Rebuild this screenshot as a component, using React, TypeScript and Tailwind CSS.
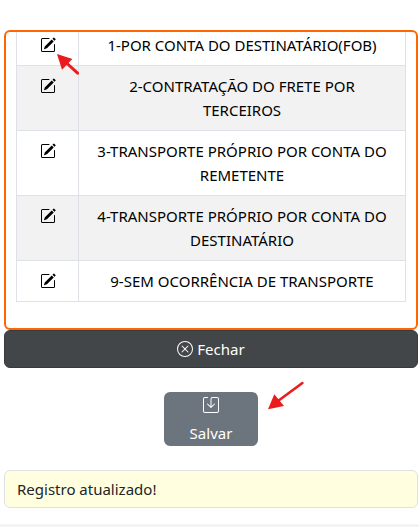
import { BsPencilSquare, BsSave, BsXCircle } from 'react-icons/bs'

const FREIGHT_TYPES = [
  '1-POR CONTA DO DESTINATÁRIO(FOB)',
  '2-CONTRATAÇÃO DO FRETE POR TERCEIROS',
  '3-TRANSPORTE PRÓPRIO POR CONTA DO REMETENTE',
  '4-TRANSPORTE PRÓPRIO POR CONTA DO DESTINATÁRIO',
  '9-SEM OCORRÊNCIA DE TRANSPORTE',
]

/** Red pointer aimed up and left, at the edit icon. */
function EditPointer() {
  return (
    <svg
      aria-hidden
      viewBox="0 0 24 22"
      className="pointer-events-none absolute left-10 top-[29px] z-10 h-[22px] w-6"
    >
      <path d="M0 0 15.4 5 5 15.8Z" fill="#ea1c1c" />
      <path d="M9 8.5 20.6 19.2" stroke="#ea1c1c" strokeWidth="3" strokeLinecap="round" />
    </svg>
  )
}

/** Red pointer aimed down and left, at the save button. */
function SavePointer() {
  return (
    <svg
      aria-hidden
      viewBox="0 0 38 30"
      className="pointer-events-none absolute -top-3 left-[104px] h-[30px] w-[38px]"
    >
      <path d="M0 29.3 6.3 14.3 16 26Z" fill="#ea1c1c" />
      <path d="M10 21 34.4 3" stroke="#ea1c1c" strokeWidth="2.6" strokeLinecap="round" />
    </svg>
  )
}

export default function App() {
  return (
    <main className="bg-white pl-1 pr-px pt-[30px] font-['Noto_Sans','Open_Sans',sans-serif] text-[15px] leading-6 text-black">
      <section className="overflow-hidden rounded-md border-2 border-[#ff6600] px-2.5 pb-[26px]">
        {/* list is scrolled, so the first row is cut by the frame */}
        <table className="-mt-2 w-full border-collapse text-center">
          <tbody>
            {FREIGHT_TYPES.map((label, i) => (
              <tr key={label} className="even:bg-[#f2f2f2]">
                <td className="relative w-[62px] border border-[#dee2e6] p-2 align-top">
                  <button
                    type="button"
                    aria-label={`Editar ${label}`}
                    className="flex h-6 w-full items-center justify-center"
                  >
                    <BsPencilSquare size={16} />
                  </button>
                  {i === 0 && <EditPointer />}
                </td>
                <td className="border border-[#dee2e6] px-3 py-2">{label}</td>
              </tr>
            ))}
          </tbody>
        </table>
      </section>

      <button
        type="button"
        className="flex w-full items-center justify-center gap-1 rounded-md border border-[#373b3e] bg-[#424649] px-3 py-1.5 text-white"
      >
        <BsXCircle size={16} />
        Fechar
      </button>

      <div className="mt-6 flex justify-center">
        <div className="relative">
          <button
            type="button"
            className="flex h-[54px] w-[94px] flex-col items-center justify-between rounded-md bg-[#6c757d] pt-[5px] text-white"
          >
            <BsSave size={16} />
            <span className="pb-px">Salvar</span>
          </button>
          <SavePointer />
        </div>
      </div>

      <p
        role="status"
        className="mt-6 rounded-md border border-[#dee2e6] bg-[#ffffe0] px-3 py-1.5 text-[#212529]"
      >
        Registro atualizado!
      </p>

      <footer className="-ml-1 -mr-px mt-4 h-[3px] bg-[#f4f4f4]" />
    </main>
  )
}
